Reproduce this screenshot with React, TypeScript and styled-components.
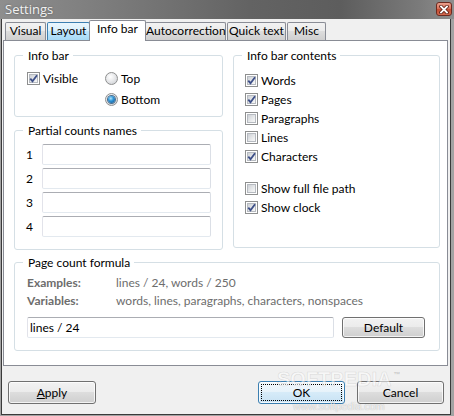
import React from 'react'
import styled, { createGlobalStyle } from 'styled-components'

const GlobalStyle = createGlobalStyle`
  html, body {
    margin: 0;
    padding: 0;
    background: #ffffff;
  }
  body {
    font-family: Lato, "Open Sans", "Liberation Sans", sans-serif;
    font-size: 12px;
    color: #000000;
  }
`

const tabs = [
    { label: 'Visual', width: 41 },
    { label: 'Layout', width: 43, hover: true },
    { label: 'Info bar', width: 57, active: true },
    { label: 'Autocorrection', width: 81 },
    { label: 'Quick text', width: 59 },
    { label: 'Misc', width: 39 },
]

const counters = [
    { label: 'Words', checked: true },
    { label: 'Pages', checked: true },
    { label: 'Paragraphs', checked: false },
    { label: 'Lines', checked: false },
    { label: 'Characters', checked: true },
]

const extras = [
    { label: 'Show full file path', checked: false },
    { label: 'Show clock', checked: true },
]

const Check: React.FC<{ checked?: boolean; label: string }> = ({ checked, label }) => (
    <CheckRow>
        <CheckBox>
            <CheckFill />
            {checked && (
                <CheckMark viewBox="0 0 9 9" width="9" height="9">
                    <path d="M1.3 4.6 L3.5 7.2 L8 1.2" fill="none" stroke="#3d4f88" strokeWidth="1.8" strokeLinejoin="miter" />
                </CheckMark>
            )}
        </CheckBox>
        <span>{label}</span>
    </CheckRow>
)

const Radio: React.FC<{ on?: boolean; label: string }> = ({ on, label }) => (
    <RadioRow>
        <RadioDot>{on && <RadioCore />}</RadioDot>
        <span>{label}</span>
    </RadioRow>
)

const App: React.FC = () => {
    return (
        <>
            <GlobalStyle />
            <Window>
                <TitleBar>
                    <Title>Settings</Title>
                    <CloseButton>
                        <svg viewBox="0 0 10 9" width="10" height="9">
                            <path d="M2 1.5 L8 7.5 M8 1.5 L2 7.5" stroke="#5a1d12" strokeWidth="3.4" strokeLinecap="square" />
                            <path d="M2 1.5 L8 7.5 M8 1.5 L2 7.5" stroke="#ffffff" strokeWidth="1.8" strokeLinecap="square" />
                        </svg>
                    </CloseButton>
                </TitleBar>
                <Frame>
                    <Body>
                        <TabStrip>
                            {tabs.map(t => (
                                <Tab key={t.label} $w={t.width} $active={t.active} $hover={t.hover}>
                                    {t.label}
                                </Tab>
                            ))}
                        </TabStrip>
                        <Panel>
                            <TopGrid>
                                <Column>
                                    <GroupBox $h={69}>
                                        <Legend>Info bar</Legend>
                                        <InfoBarGrid>
                                            <Check checked label="Visible" />
                                            <Radio label="Top" />
                                            <span />
                                            <Radio on label="Bottom" />
                                        </InfoBarGrid>
                                    </GroupBox>
                                    <GroupBox $h={127}>
                                        <Legend>Partial counts names</Legend>
                                        <NameList>
                                            {[1, 2, 3, 4].map(n => (
                                                <NameRow key={n}>
                                                    <NameLabel>{n}</NameLabel>
                                                    <Field readOnly $w={169} />
                                                </NameRow>
                                            ))}
                                        </NameList>
                                    </GroupBox>
                                </Column>
                                <GroupBox $h={200}>
                                    <Legend>Info bar contents</Legend>
                                    <CheckList>
                                        {counters.map(c => (
                                            <Check key={c.label} checked={c.checked} label={c.label} />
                                        ))}
                                        <Spacer />
                                        {extras.map(c => (
                                            <Check key={c.label} checked={c.checked} label={c.label} />
                                        ))}
                                    </CheckList>
                                </GroupBox>
                            </TopGrid>
                            <FormulaBox $h={96}>
                                <Legend>Page count formula</Legend>
                                <FormulaBody>
                                    <HintGrid>
                                        <HintLabel>Examples:</HintLabel>
                                        <HintValue>lines / 24, words / 250</HintValue>
                                        <HintLabel>Variables:</HintLabel>
                                        <HintValue>words, lines, paragraphs, characters, nonspaces</HintValue>
                                    </HintGrid>
                                    <FormulaRow>
                                        <Field readOnly $w={307} defaultValue="lines / 24" />
                                        <Button $w={83} $h={21}>Default</Button>
                                    </FormulaRow>
                                </FormulaBody>
                            </FormulaBox>
                        </Panel>
                        <ButtonBar>
                            <Button $w={88} $h={23}><u>A</u>pply</Button>
                            <RightButtons>
                                <Button $w={87} $h={23} $default>OK</Button>
                                <Button $w={87} $h={23}>Cancel</Button>
                            </RightButtons>
                        </ButtonBar>
                        <Watermark>
                            <WatermarkBrand>SOFTPEDIA<sup>™</sup></WatermarkBrand>
                            <WatermarkUrl>www.softpedia.com</WatermarkUrl>
                        </Watermark>
                    </Body>
                </Frame>
            </Window>
        </>
    )
}

const Window = styled.div`
    width: 454px;
    height: 416px;
    display: flex;
    flex-direction: column;
    background: #a3a3a3;
    overflow: hidden;
`

const TitleBar = styled.div`
    height: 19px;
    flex: none;
    display: flex;
    justify-content: space-between;
    align-items: flex-start;
    padding: 0 2px 0 5px;
    box-sizing: border-box;
    background: linear-gradient(to right, #8e8e8e 0%, #7b7b7b 25%, #636363 55%, #5d5d5d 75%, #7a7a7a 92%, #8e8e8e 100%);
`

const Title = styled.span`
    font-family: "Open Sans", "Liberation Sans", sans-serif;
    font-size: 13px;
    line-height: 18px;
    color: #f2f2f2;
    text-shadow: 0 0 2px rgba(0, 0, 0, 0.35);
`

const CloseButton = styled.div`
    width: 16px;
    height: 14px;
    margin-top: 2px;
    box-sizing: border-box;
    border: 1px solid #6e2a1f;
    border-radius: 3px;
    background: linear-gradient(#eaa08d 0%, #d8735c 45%, #c54c31 55%, #d26a50 100%);
    display: flex;
    align-items: center;
    justify-content: center;
`

const Frame = styled.div`
    flex: 1;
    display: flex;
    padding: 0 3px 1px 1px;
    min-height: 0;
`

const Body = styled.div`
    flex: 1;
    position: relative;
    display: flex;
    flex-direction: column;
    background: #f0f0f0;
    border: 1px solid #3a3a3a;
    border-top: none;
    padding: 1px 2px 0 1px;
`

const TabStrip = styled.div`
    height: 20px;
    flex: none;
    display: flex;
    align-items: flex-end;
    gap: 1px;
    padding-left: 2px;
`

const Tab = styled.div<{ $w: number; $active?: boolean; $hover?: boolean }>`
    width: ${p => p.$w}px;
    height: ${p => (p.$active ? 21 : 18)}px;
    box-sizing: border-box;
    margin: ${p => (p.$active ? '0 -2px -1px' : '0')};
    position: relative;
    z-index: ${p => (p.$active ? 1 : 0)};
    border: 1px solid ${p => (p.$hover ? '#3c7fb1' : '#898c95')};
    border-bottom: none;
    border-radius: 2px 2px 0 0;
    background: ${p =>
        p.$active
            ? '#ffffff'
            : p.$hover
            ? 'linear-gradient(#eaf6fd 0%, #d9f0fc 49%, #bee6fd 50%, #a7d9f5 100%)'
            : 'linear-gradient(#f2f2f2 0%, #ebebeb 49%, #dddddd 50%, #cfcfcf 100%)'};
    line-height: 16px;
    text-align: center;
    white-space: nowrap;
`

const Panel = styled.div`
    height: 326px;
    flex: none;
    box-sizing: border-box;
    border: 1px solid #898c95;
    background: #ffffff;
    padding: 7px 7px 14px 10px;
    display: flex;
    flex-direction: column;
`

const TopGrid = styled.div`
    display: grid;
    grid-template-columns: 209px 207px;
    column-gap: 10px;
    align-items: start;
`

const Column = styled.div`
    display: flex;
    flex-direction: column;
    gap: 6px;
`

const GroupBox = styled.fieldset<{ $h: number }>`
    height: ${p => p.$h}px;
    box-sizing: border-box;
    margin: 0;
    padding: 0;
    min-width: 0;
    border: 1px solid #d5dfe5;
    border-radius: 3px;
`

const FormulaBox = styled(GroupBox)`
    margin-top: 5px;
`

const Legend = styled.legend`
    margin-left: 8px;
    padding: 0 4px 0 5px;
    line-height: 15px;
    color: #000000;
`

const InfoBarGrid = styled.div`
    display: grid;
    grid-template-columns: 78px auto;
    grid-auto-rows: 21px;
    align-items: center;
    padding: 5px 0 0 12px;
`

const CheckRow = styled.label`
    display: flex;
    align-items: center;
    gap: 3px;
    height: 19px;
`

const CheckBox = styled.span`
    width: 13px;
    height: 13px;
    box-sizing: border-box;
    border: 1px solid #8e8f8f;
    background: #ffffff;
    padding: 1px;
    display: grid;
    flex: none;

    & > * {
        grid-area: 1 / 1;
    }
`

const CheckFill = styled.span`
    border: 1px solid #b6bac0;
    background: linear-gradient(135deg, #cdd0d5 0%, #e6e8ea 55%, #f8f8f8 100%);
`

const CheckMark = styled.svg`
    display: block;
    overflow: visible;
`

const RadioRow = styled.label`
    display: flex;
    align-items: center;
    gap: 3px;
`

const RadioDot = styled.span`
    width: 13px;
    height: 13px;
    box-sizing: border-box;
    flex: none;
    border-radius: 50%;
    border: 1px solid #8e8f8f;
    background: radial-gradient(circle at 40% 35%, #ffffff 0%, #e8e9eb 45%, #c6c9ce 100%);
    display: flex;
    align-items: center;
    justify-content: center;
`

const RadioCore = styled.span`
    width: 7px;
    height: 7px;
    border-radius: 50%;
    background: radial-gradient(circle at 40% 35%, #b5e6fb 0%, #3196d8 40%, #0c4e88 100%);
    box-shadow: 0 0 0 1px #4b6f8f;
`

const NameList = styled.div`
    display: flex;
    flex-direction: column;
    gap: 3px;
    padding: 6px 0 0 11px;
`

const NameRow = styled.div`
    display: flex;
    align-items: center;
    height: 21px;
`

const NameLabel = styled.span`
    width: 16px;
    flex: none;
`

const Field = styled.input<{ $w: number }>`
    width: ${p => p.$w}px;
    height: 21px;
    box-sizing: border-box;
    margin: 0;
    padding: 0 2px;
    border: 1px solid;
    border-color: #abadb3 #dbdfe6 #e3e9ef #e2e3ea;
    border-radius: 2px;
    background: #ffffff;
    font: inherit;
    color: #000000;
    outline: none;
`

const CheckList = styled.div`
    display: flex;
    flex-direction: column;
    align-items: flex-start;
    padding: 8px 0 0 11px;
`

const Spacer = styled.div`
    height: 13px;
`

const FormulaBody = styled.div`
    padding: 3px 0 0 12px;
`

const HintGrid = styled.div`
    display: grid;
    grid-template-columns: 89px auto;
    grid-auto-rows: 18px;
    align-items: center;
    color: #6d6d6d;
`

const HintLabel = styled.span`
    font-weight: 700;
`

const HintValue = styled.span``

const FormulaRow = styled.div`
    display: flex;
    gap: 8px;
    margin-top: 8px;
`

const Button = styled.button<{ $w: number; $h: number; $default?: boolean }>`
    width: ${p => p.$w}px;
    height: ${p => p.$h}px;
    box-sizing: border-box;
    margin: 0;
    padding: 0;
    font: inherit;
    color: #000000;
    border: 1px solid ${p => (p.$default ? '#3c7fb1' : '#707070')};
    border-radius: 3px;
    background: ${p =>
        p.$default
            ? 'linear-gradient(#f3f9fd 0%, #e6f2fa 49%, #d6ebf8 50%, #c8e2f4 100%)'
            : 'linear-gradient(#f2f2f2 0%, #ebebeb 49%, #dddddd 50%, #cfcfcf 100%)'};
    box-shadow: inset 0 0 0 1px rgba(255, 255, 255, 0.75);
    outline: ${p => (p.$default ? '1px dotted #000000' : 'none')};
    outline-offset: -4px;
`

const ButtonBar = styled.div`
    display: flex;
    justify-content: space-between;
    align-items: center;
    margin: 15px 0 10px;
    padding: 0 4px 0 5px;
    height: 23px;
`

const RightButtons = styled.div`
    display: flex;
    gap: 12px;
`

const Watermark = styled.div`
    position: absolute;
    left: 275px;
    top: 352px;
    display: flex;
    flex-direction: column;
    align-items: center;
    pointer-events: none;
    font-family: "Liberation Sans", sans-serif;
`

const WatermarkBrand = styled.div`
    font-size: 20px;
    font-weight: 700;
    line-height: 16px;
    color: rgba(255, 255, 255, 0.55);
    -webkit-text-stroke: 0.6px rgba(150, 150, 150, 0.3);

    sup {
        font-size: 7px;
        line-height: 7px;
        vertical-align: top;
        margin-left: 2px;
        -webkit-text-stroke: 0;
        color: rgba(170, 170, 170, 0.6);
    }
`

const WatermarkUrl = styled.div`
    margin-top: 14px;
    font-size: 11px;
    line-height: 11px;
    letter-spacing: -0.2px;
    color: rgba(255, 255, 255, 0.75);
    text-shadow: 0 0 1px rgba(0, 0, 0, 0.3);
`

export default App
